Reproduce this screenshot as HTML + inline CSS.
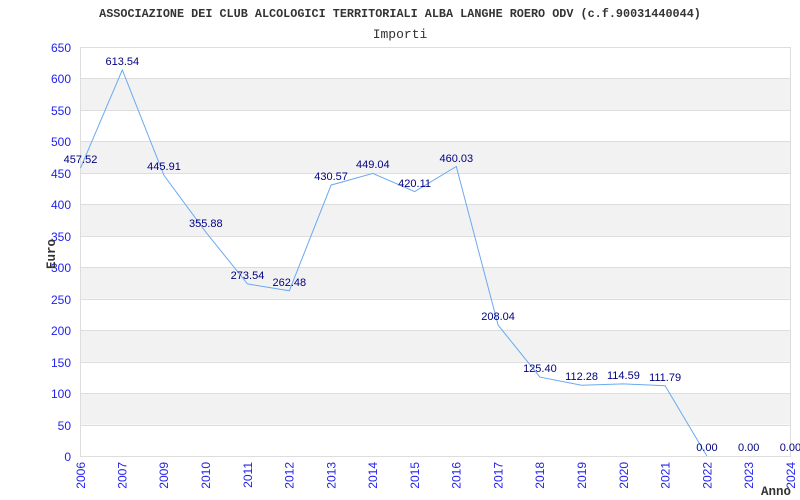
<!DOCTYPE html><html><head><style>body{margin:0;background:#fff}svg{display:block}</style></head><body>
<svg width="800" height="500" xmlns="http://www.w3.org/2000/svg">
<text x="400" y="17" text-anchor="middle" font-family="Liberation Mono, monospace" font-size="11.8" font-weight="bold" fill="#333">ASSOCIAZIONE DEI CLUB ALCOLOGICI TERRITORIALI ALBA LANGHE ROERO ODV (c.f.90031440044)</text>
<text x="400" y="38" text-anchor="middle" font-family="Liberation Mono, monospace" font-size="13" fill="#333">Importi</text>
<g fill="#f2f2f2">
<rect x="80.5" y="78.5" width="710" height="31.5"/><rect x="80.5" y="141.4" width="710" height="31.5"/><rect x="80.5" y="204.3" width="710" height="31.5"/><rect x="80.5" y="267.2" width="710" height="31.5"/><rect x="80.5" y="330.2" width="710" height="31.5"/><rect x="80.5" y="393.1" width="710" height="31.5"/>
</g>
<g stroke="#ddd" stroke-width="1">
<line x1="80" y1="47.5" x2="790" y2="47.5"/><line x1="80" y1="78.5" x2="790" y2="78.5"/><line x1="80" y1="110.5" x2="790" y2="110.5"/><line x1="80" y1="141.5" x2="790" y2="141.5"/><line x1="80" y1="173.5" x2="790" y2="173.5"/><line x1="80" y1="204.5" x2="790" y2="204.5"/><line x1="80" y1="236.5" x2="790" y2="236.5"/><line x1="80" y1="267.5" x2="790" y2="267.5"/><line x1="80" y1="299.5" x2="790" y2="299.5"/><line x1="80" y1="330.5" x2="790" y2="330.5"/><line x1="80" y1="362.5" x2="790" y2="362.5"/><line x1="80" y1="393.5" x2="790" y2="393.5"/><line x1="80" y1="425.5" x2="790" y2="425.5"/><line x1="80" y1="456.5" x2="790" y2="456.5"/>
<line x1="80.5" y1="47" x2="80.5" y2="457"/><line x1="790.5" y1="47" x2="790.5" y2="457"/>
</g>
<g font-family="Liberation Sans, sans-serif" font-size="12" fill="#2222ee" text-anchor="end">
<text x="71" y="52">650</text><text x="71" y="83">600</text><text x="71" y="115">550</text><text x="71" y="146">500</text><text x="71" y="178">450</text><text x="71" y="209">400</text><text x="71" y="241">350</text><text x="71" y="272">300</text><text x="71" y="304">250</text><text x="71" y="335">200</text><text x="71" y="367">150</text><text x="71" y="398">100</text><text x="71" y="430">50</text><text x="71" y="461">0</text>
</g>
<g font-family="Liberation Sans, sans-serif" font-size="12" fill="#2222ee" text-anchor="end">
<text transform="translate(85,462) rotate(-90)">2006</text>
<text transform="translate(126.5,462) rotate(-90)">2007</text>
<text transform="translate(168,462) rotate(-90)">2009</text>
<text transform="translate(210,462) rotate(-90)">2010</text>
<text transform="translate(252,462) rotate(-90)">2011</text>
<text transform="translate(293.5,462) rotate(-90)">2012</text>
<text transform="translate(335.5,462) rotate(-90)">2013</text>
<text transform="translate(377,462) rotate(-90)">2014</text>
<text transform="translate(419,462) rotate(-90)">2015</text>
<text transform="translate(460.5,462) rotate(-90)">2016</text>
<text transform="translate(502.5,462) rotate(-90)">2017</text>
<text transform="translate(544,462) rotate(-90)">2018</text>
<text transform="translate(586,462) rotate(-90)">2019</text>
<text transform="translate(628,462) rotate(-90)">2020</text>
<text transform="translate(669.5,462) rotate(-90)">2021</text>
<text transform="translate(711.5,462) rotate(-90)">2022</text>
<text transform="translate(753,462) rotate(-90)">2023</text>
<text transform="translate(795,462) rotate(-90)">2024</text>
</g>
<text transform="translate(55,254) rotate(-90)" text-anchor="middle" font-family="Liberation Mono, monospace" font-size="12.5" font-weight="bold" fill="#333">Euro</text>
<text x="761" y="495" font-family="Liberation Mono, monospace" font-size="12.5" font-weight="bold" fill="#333">Anno</text>
<polyline fill="none" stroke="#6aaaf0" stroke-width="1" points="80.5,168.1 122.3,69.9 164,175.4 205.8,232.1 247.5,283.9 289.3,290.8 331.1,185.1 372.8,173.4 414.6,191.6 456.3,166.5 498.1,325.1 539.9,377.1 581.6,385.3 623.4,383.9 665.1,385.7 706.9,456"/>
<g font-family="Liberation Sans, sans-serif" font-size="11" fill="#000080" text-anchor="middle">
<text x="80.5" y="163">457.52</text><text x="122.3" y="65">613.54</text><text x="164" y="170">445.91</text><text x="205.8" y="227">355.88</text><text x="247.5" y="279">273.54</text><text x="289.3" y="286">262.48</text><text x="331.1" y="180">430.57</text><text x="372.8" y="168">449.04</text><text x="414.6" y="187">420.11</text><text x="456.3" y="162">460.03</text><text x="498.1" y="320">208.04</text><text x="539.9" y="372">125.40</text><text x="581.6" y="380">112.28</text><text x="623.4" y="379">114.59</text><text x="665.1" y="381">111.79</text><text x="706.9" y="451">0.00</text><text x="748.7" y="451">0.00</text><text x="790.4" y="451">0.00</text>
</g>
</svg>
</body></html>
